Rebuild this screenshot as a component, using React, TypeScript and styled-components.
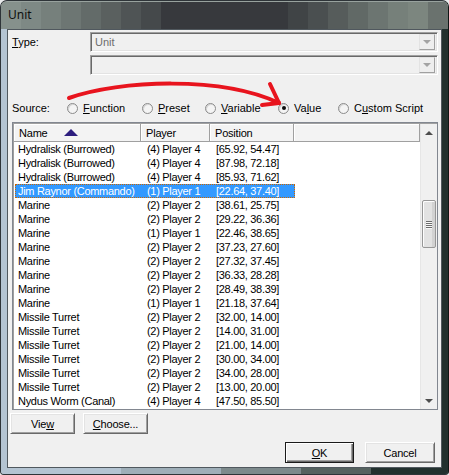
import React from 'react';
import styled, { createGlobalStyle } from 'styled-components';

const Global = createGlobalStyle`
  html, body { margin: 0; padding: 0; background: #e9ebec; }
  body { font-family: "Liberation Sans", Arial, sans-serif; font-size: 11px; color: #000; }
  * { box-sizing: border-box; }
`;

const Window = styled.div`
  position: relative;
  width: 449px;
  height: 475px;
  border: 1px solid #2e3438;
  border-right-color: #101615;
  border-radius: 7px 7px 4px 4px;
  display: flex;
  flex-direction: column;
  overflow: hidden;
  background: #55605f;
`;

const TitleBar = styled.div`
  height: 28px;
  flex: none;
  display: flex;
  align-items: center;
  padding: 0 0 2px 7px;
  font-family: "Noto Sans", "Open Sans", sans-serif;
  font-size: 12px;
  color: #101010;
  background: #37393d;
  border-top: 1px solid #98a29e;
  box-shadow:
    inset 20px 0 0 #86918c,
    inset 40px 0 0 #7e8985,
    inset 60px 0 0 #76807c,
    inset 80px 0 0 #6d7673,
    inset 100px 0 0 #636b69,
    inset 120px 0 0 #5a605f,
    inset 140px 0 0 #4f5455,
    inset 160px 0 0 #45494b,
    inset -20px 0 0 #6a726e,
    inset -40px 0 0 #7c867f,
    inset -60px 0 0 #76807a,
    inset -80px 0 0 #6c7571,
    inset -100px 0 0 #616966,
    inset -120px 0 0 #565c5b,
    inset -140px 0 0 #4a4f50,
    inset -160px 0 0 #404446;
`;

const Body = styled.div`
  flex: 1;
  display: flex;
  padding: 0 6px 6px 6px;
  background: #22302e;
  box-shadow:
    inset 120px 0 0 #b4c4d2,
    inset 220px 0 0 #9eaeb8,
    inset 300px 0 0 #7d8a8c,
    inset 370px 0 0 #55625f;
`;

const Client = styled.div`
  flex: 1;
  background: #f0f0f0;
  border: 1px solid #50585e;
  display: flex;
  flex-direction: column;
  padding: 2px 3px 4px 4px;
`;

const TypeGrid = styled.div`
  display: grid;
  grid-template-columns: 78px 1fr;
  row-gap: 3px;
  align-items: center;
`;

const Label = styled.span`
  font-size: 11px;
  color: #000;
  line-height: 20px;
`;

const Combo = styled.div`
  height: 20px;
  border: 1px solid;
  border-color: #a0a0a0 #ffffff #ffffff #a0a0a0;
  box-shadow: inset 1px 1px 0 #696969, inset -1px -1px 0 #e3e3e3;
  background: #f0f0f0;
  display: flex;
  align-items: center;
  padding: 0 2px 0 4px;
`;

const ComboText = styled.span`
  flex: 1;
  color: #6d6d6d;
`;

const DropButton = styled.div`
  width: 16px;
  height: 16px;
  border: 1px solid;
  border-color: #e3e3e3 #a0a0a0 #a0a0a0 #e3e3e3;
  background: #eeeeee;
  display: flex;
  align-items: center;
  justify-content: center;
`;

const Tri = styled.span<{ $up?: boolean; $color?: string }>`
  width: 0;
  height: 0;
  border-left: 4px solid transparent;
  border-right: 4px solid transparent;
  ${(p) => (p.$up ? `border-bottom: 4px solid ${p.$color || '#4d4d4d'};` : `border-top: 4px solid ${p.$color || '#4d4d4d'};`)}
`;

const SourceRow = styled.div`
  margin-top: 25px;
  height: 16px;
  display: flex;
  align-items: center;
`;

const SourceLabel = styled.span`
  width: 55px;
`;

const RadioItem = styled.div<{ $w: number }>`
  width: ${(p) => p.$w}px;
  display: flex;
  align-items: center;
  gap: 5px;
  flex: none;
`;

const RadioCircle = styled.span<{ $checked?: boolean }>`
  width: 11px;
  height: 11px;
  border-radius: 50%;
  border: 1px solid #8b8b8b;
  background: #f4f4f4;
  box-shadow: inset 1px 1px 0 #d6d6d6;
  display: flex;
  align-items: center;
  justify-content: center;
  &::after {
    content: '';
    width: 4px;
    height: 4px;
    border-radius: 50%;
    background: ${(p) => (p.$checked ? '#0c0c0c' : 'transparent')};
  }
`;

const List = styled.div`
  margin-top: 6px;
  height: 288px;
  border: 1px solid #828790;
  box-shadow: inset 1px 1px 0 #a0a0a0;
  background: #fff;
  display: flex;
  padding: 1px 0 0 1px;
`;

const ListBody = styled.div`
  flex: 1;
  display: flex;
  flex-direction: column;
  overflow: hidden;
`;

const Header = styled.div`
  height: 18px;
  display: flex;
  flex: none;
  border-bottom: 1px solid #a0a0a0;
`;

const HeaderCell = styled.div<{ $w?: number }>`
  ${(p) => (p.$w ? `width: ${p.$w}px; flex: none;` : 'flex: 1;')}
  background: #f3f3f3;
  border-right: 1px solid #a0a0a0;
  box-shadow: inset 1px 1px 0 #ffffff;
  display: flex;
  align-items: center;
  padding-left: 5px;
  letter-spacing: -0.2px;
`;

const SortArrow = styled.span`
  margin-left: 16px;
  width: 0;
  height: 0;
  border-left: 7px solid transparent;
  border-right: 7px solid transparent;
  border-bottom: 7px solid #2d1e7e;
`;

const Row = styled.div`
  height: 14px;
  display: flex;
  flex: none;
`;

const RowMain = styled.div<{ $sel?: boolean }>`
  display: flex;
  width: 280px;
  flex: none;
  margin-left: 1px;
  background: ${(p) => (p.$sel ? '#3399ff' : 'transparent')};
  color: ${(p) => (p.$sel ? '#ffffff' : '#000000')};
  outline: ${(p) => (p.$sel ? '1px dotted #cc6600' : 'none')};
  outline-offset: -1px;
`;

const Cell = styled.div<{ $w: number; $pad: number }>`
  width: ${(p) => p.$w}px;
  flex: none;
  padding-left: ${(p) => p.$pad}px;
  line-height: 14px;
  white-space: nowrap;
  letter-spacing: -0.3px;
`;

const ScrollBar = styled.div`
  width: 17px;
  flex: none;
  display: flex;
  flex-direction: column;
  background: #f0f0f0;
  border-left: 1px solid #e6e6e6;
`;

const ScrollArrow = styled.div`
  height: 17px;
  flex: none;
  display: flex;
  align-items: center;
  justify-content: center;
`;

const Track = styled.div`
  flex: 1;
  padding-top: 59px;
`;

const Thumb = styled.div`
  width: 14px;
  height: 48px;
  margin-left: 1px;
  border: 1px solid #979797;
  border-radius: 2px;
  background: #e2e2e2;
  box-shadow: inset 1px 1px 0 #fdfdfd, inset -4px 0 0 -1px #d2d2d2;
  display: flex;
  flex-direction: column;
  align-items: center;
  justify-content: center;
  gap: 1px;
`;

const Grip = styled.span`
  width: 6px;
  height: 1px;
  background: #6b6b6b;
  box-shadow: 0 1px 0 #f8f8f8;
`;

const ButtonRow = styled.div<{ $top: number; $end?: boolean }>`
  margin-top: ${(p) => p.$top}px;
  display: flex;
  gap: ${(p) => (p.$end ? 11 : 8)}px;
  justify-content: ${(p) => (p.$end ? 'flex-end' : 'flex-start')};
  margin-left: -2px;
  padding-right: ${(p) => (p.$end ? 3 : 0)}px;
`;

const Button = styled.div<{ $w: number; $def?: boolean }>`
  width: ${(p) => p.$w}px;
  height: 21px;
  border: 1px solid;
  border-color: ${(p) => (p.$def ? '#1a1a1a' : '#ffffff #696969 #696969 #ffffff')};
  box-shadow: ${(p) =>
    p.$def
      ? 'inset 1px 1px 0 #ffffff, inset -1px -1px 0 #696969, inset -2px -2px 0 #a0a0a0'
      : 'inset 1px 1px 0 #e3e3e3, inset -1px -1px 0 #a0a0a0'};
  background: #f0f0f0;
  display: flex;
  align-items: center;
  justify-content: center;
  font-size: 11px;
  letter-spacing: -0.2px;
`;

const Overlay = styled.svg`
  position: absolute;
  left: -1px;
  top: -1px;
  pointer-events: none;
`;

type R = [string, string, string];
const rows: R[] = [
  ['Hydralisk (Burrowed)', '(4) Player 4', '[65.92, 54.47]'],
  ['Hydralisk (Burrowed)', '(4) Player 4', '[87.98, 72.18]'],
  ['Hydralisk (Burrowed)', '(4) Player 4', '[85.93, 71.62]'],
  ['Jim Raynor (Commando)', '(1) Player 1', '[22.64, 37.40]'],
  ['Marine', '(2) Player 2', '[38.61, 25.75]'],
  ['Marine', '(2) Player 2', '[29.22, 36.36]'],
  ['Marine', '(1) Player 1', '[22.46, 38.65]'],
  ['Marine', '(2) Player 2', '[37.23, 27.60]'],
  ['Marine', '(2) Player 2', '[27.32, 37.45]'],
  ['Marine', '(2) Player 2', '[36.33, 28.28]'],
  ['Marine', '(2) Player 2', '[28.49, 38.39]'],
  ['Marine', '(1) Player 1', '[21.18, 37.64]'],
  ['Missile Turret', '(2) Player 2', '[32.00, 14.00]'],
  ['Missile Turret', '(2) Player 2', '[14.00, 31.00]'],
  ['Missile Turret', '(2) Player 2', '[21.00, 14.00]'],
  ['Missile Turret', '(2) Player 2', '[30.00, 34.00]'],
  ['Missile Turret', '(2) Player 2', '[34.00, 28.00]'],
  ['Missile Turret', '(2) Player 2', '[13.00, 20.00]'],
  ['Nydus Worm (Canal)', '(4) Player 4', '[47.50, 85.50]'],
];

const radios: { label: React.ReactNode; w: number; checked?: boolean }[] = [
  { label: <><u>F</u>unction</>, w: 75 },
  { label: <><u>P</u>reset</>, w: 63 },
  { label: <><u>V</u>ariable</>, w: 73 },
  { label: <>Va<u>l</u>ue</>, w: 60, checked: true },
  { label: <>C<u>u</u>stom Script</>, w: 90 },
];

export default function App() {
  return (
    <>
      <Global />
      <Window>
        <TitleBar>Unit</TitleBar>
        <Body>
          <Client>
            <TypeGrid>
              <Label><u>T</u>ype:</Label>
              <Combo>
                <ComboText>Unit</ComboText>
                <DropButton><Tri $color="#a3a3a3" /></DropButton>
              </Combo>
              <span />
              <Combo>
                <ComboText />
                <DropButton><Tri $color="#a3a3a3" /></DropButton>
              </Combo>
            </TypeGrid>
            <SourceRow>
              <SourceLabel>Source:</SourceLabel>
              {radios.map((r, i) => (
                <RadioItem key={i} $w={r.w}>
                  <RadioCircle $checked={r.checked} />
                  <span>{r.label}</span>
                </RadioItem>
              ))}
            </SourceRow>
            <List>
              <ListBody>
                <Header>
                  <HeaderCell $w={127}>Name<SortArrow /></HeaderCell>
                  <HeaderCell $w={69}>Player</HeaderCell>
                  <HeaderCell $w={84}>Position</HeaderCell>
                  <HeaderCell />
                </Header>
                {rows.map((r, i) => (
                  <Row key={i}>
                    <RowMain $sel={i === 3}>
                      <Cell $w={125} $pad={3}>{r[0]}</Cell>
                      <Cell $w={70} $pad={7}>{r[1]}</Cell>
                      <Cell $w={85} $pad={6}>{r[2]}</Cell>
                    </RowMain>
                  </Row>
                ))}
              </ListBody>
              <ScrollBar>
                <ScrollArrow><Tri $up /></ScrollArrow>
                <Track>
                  <Thumb>
                    <Grip /><Grip /><Grip /><Grip />
                  </Thumb>
                </Track>
                <ScrollArrow><Tri /></ScrollArrow>
              </ScrollBar>
            </List>
            <ButtonRow $top={3}>
              <Button $w={65}>Vie<u>w</u></Button>
              <Button $w={65}><u>C</u>hoose...</Button>
            </ButtonRow>
            <ButtonRow $top={8} $end>
              <Button $w={69} $def><u>O</u>K</Button>
              <Button $w={70}>Cancel</Button>
            </ButtonRow>
          </Client>
        </Body>
        <Overlay width="449" height="475" viewBox="0 0 449 475">
          <g fill="none" stroke="#e8141e" strokeWidth="4" strokeLinecap="round" strokeLinejoin="round">
            <path d="M69 98 C 120 80, 222 76, 279 103" />
            <path d="M270 84 L 279 103" />
            <path d="M262 105 L 279 103" />
          </g>
        </Overlay>
      </Window>
    </>
  );
}
